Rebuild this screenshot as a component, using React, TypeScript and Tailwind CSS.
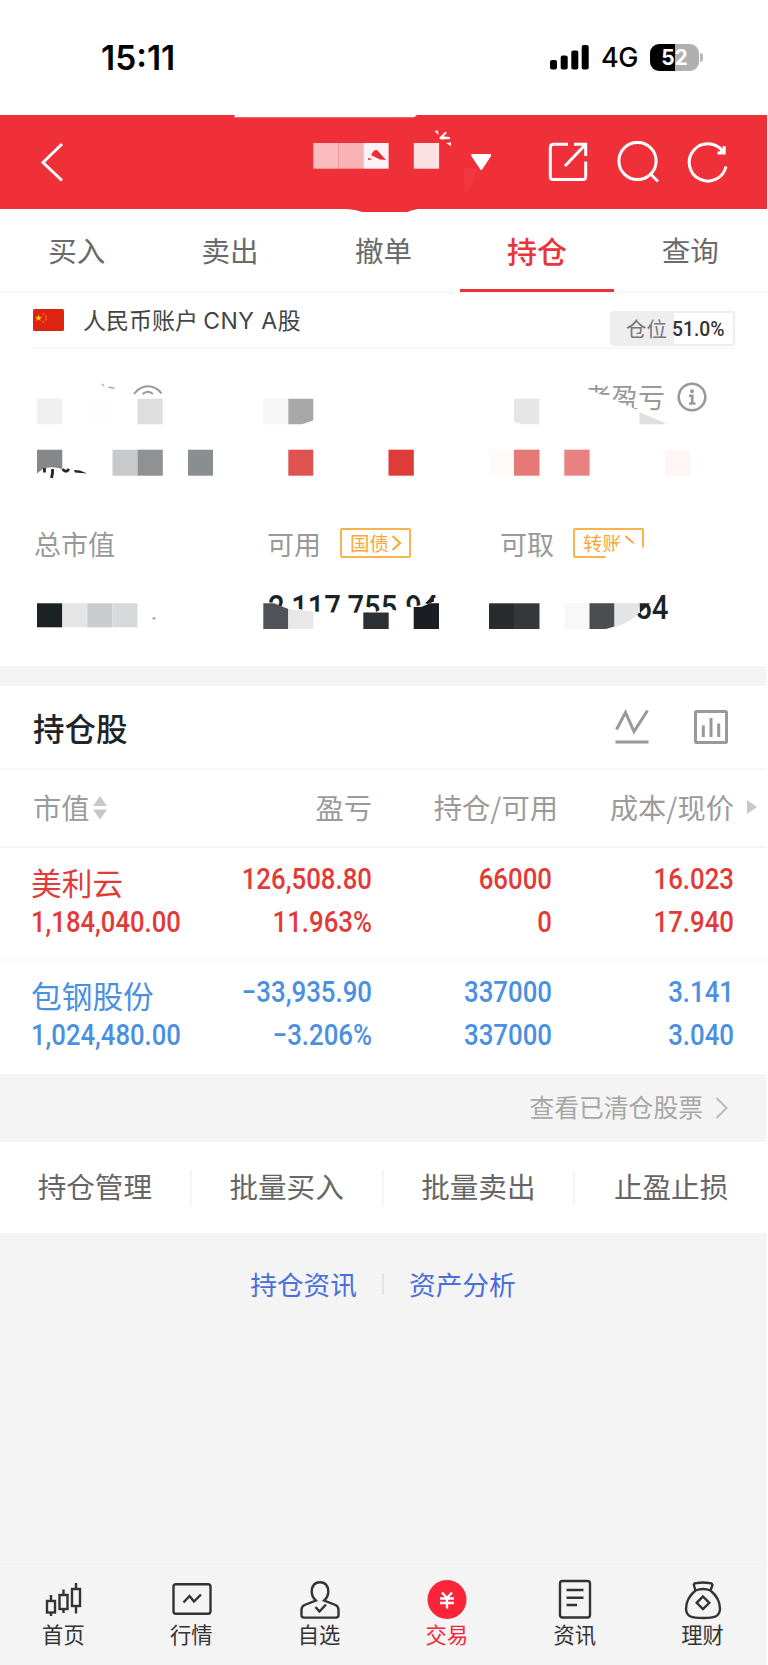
import type { ReactNode } from "react";

const CJK = "font-['Noto_Sans_CJK_SC',sans-serif]";
const NUM = "font-['Roboto',sans-serif] font-medium";

type Holding = {
  name: string;
  marketValue: string;
  profit: string;
  profitRate: string;
  amount: string;
  available: string;
  cost: string;
  price: string;
  up: boolean;
};

const holdings: Holding[] = [
  {
    name: "美利云",
    marketValue: "1,184,040.00",
    profit: "126,508.80",
    profitRate: "11.963%",
    amount: "66000",
    available: "0",
    cost: "16.023",
    price: "17.940",
    up: true,
  },
  {
    name: "包钢股份",
    marketValue: "1,024,480.00",
    profit: "−33,935.90",
    profitRate: "−3.206%",
    amount: "337000",
    available: "337000",
    cost: "3.141",
    price: "3.040",
    up: false,
  },
];

function StatusBar() {
  return (
    <div className="flex h-[115px] items-start justify-between pt-[37px] pl-[101px] pr-[64px] font-['Inter',sans-serif] text-black">
      <div className="pt-[1px] text-[33.5px] leading-[40px] font-semibold">15:11</div>
      <div className="flex h-[40px] items-center">
        <svg width="39" height="25" viewBox="0 0 39 25">
          <rect x="0" y="15" width="7" height="9.5" rx="2" />
          <rect x="10.7" y="10.5" width="7" height="14" rx="2" />
          <rect x="21.3" y="5.5" width="7" height="19" rx="2" />
          <rect x="31.7" y="0" width="7" height="24.5" rx="2" />
        </svg>
        <span className="ml-[12px] w-[38px] pt-[2px] text-[27px] leading-[38px] font-medium tracking-[-0.5px]">
          4G
        </span>
        <div className="ml-[11px] flex h-[27px] w-[49px] items-center justify-center rounded-[9px] bg-[linear-gradient(90deg,#000_52%,#b0b0b0_52%)] text-[21px] leading-none font-bold text-white">
          52
        </div>
        <div className="ml-[1px] h-[9px] w-[3px] rounded-r-full bg-[#b8b8b8]" />
      </div>
    </div>
  );
}

function Header() {
  return (
    <div className="relative flex h-[94px] items-center bg-[#f03038]">
      <svg
        className="ml-[40px]"
        width="24"
        height="40"
        viewBox="0 0 24 40"
        fill="none"
        stroke="#fff"
        strokeWidth="3"
      >
        <path d="M22 2 L3 20.5 L22 38.5" />
      </svg>
      <div className="ml-auto flex items-center gap-[28px] pr-[38px]">
        <svg
          width="42"
          height="42"
          viewBox="0 0 42 42"
          fill="none"
          stroke="#fff"
          strokeWidth="3"
        >
          <path d="M21 3.3 H6.5 Q3.3 3.3 3.3 6.5 V35.5 Q3.3 38.5 6.5 38.5 H35.5 Q38.7 38.5 38.7 35.5 V20.5" />
          <path d="M27 3.3 H38.7 V15 M38 4 L18 25" />
        </svg>
        <svg
          width="42"
          height="42"
          viewBox="0 0 42 42"
          fill="none"
          stroke="#fff"
          strokeWidth="3"
        >
          <circle cx="20.5" cy="20" r="18.6" />
          <path d="M33.5 33 L41 40.5" />
        </svg>
        <svg
          width="42"
          height="42"
          viewBox="0 0 42 42"
          fill="none"
          stroke="#fff"
          strokeWidth="3"
        >
          <path d="M39 25.5 A18.6 18.6 0 1 1 35.5 10" />
          <path d="M37.2 5 V12 H30.5" />
          <path d="M37.2 12 H31.5 L37.2 6 Z" fill="#fff" stroke="none" />
        </svg>
      </div>
      {/* account name hidden behind mosaic, plus dropdown arrow */}
      <svg
        className="absolute left-0 top-0"
        width="540"
        height="97"
        viewBox="0 115 540 97"
      >
        <path d="M235 115 H417 L414 117.3 H234 Z" fill="#fff" />
        <path d="M346 209 Q356 209.5 362 212 H407 Q412 210 418 209 Z" fill="#f03038" />
        <rect x="313.3" y="143" width="25" height="25.7" fill="#fabcbe" />
        <rect x="338.3" y="143" width="25" height="25.7" fill="#f8b3b6" />
        <rect x="363.3" y="143" width="25.3" height="25.7" fill="#fef3f4" />
        <path d="M371 155 L374 150.5 L377 150 L386 160 L380 159.5 Z M368 158 L373 159 L368 160 Z" fill="#ee2c34" />
        <rect x="413.8" y="143" width="25.3" height="25.7" fill="#fce0e2" />
        <path
          d="M434.5 131 L438 130.5 L438.5 135 Z M439 138 L445 132 L447 132.5 L443.5 136.5 L450 137 V139 L441 139.5 Z M446 143 L451 142.5 L451 146 Z"
          fill="#fff"
        />
        <path d="M464 168 H477 Q475 184 464 194 Z" fill="#f1373f" />
        <path d="M472 154 H490 Q492 154.5 491 156 L482.5 169 Q481.3 171 480 169 L471.3 156 Q470.5 154.5 472 154 Z" fill="#fff" />
      </svg>
    </div>
  );
}

const tabs = ["买入", "卖出", "撤单", "持仓", "查询"];

function TradeTabs() {
  return (
    <div className="grid h-[84px] grid-cols-5 border-b-2 border-[#f7f7f7]">
      {tabs.map((tab) => (
        <div
          key={tab}
          className={
            tab === "持仓"
              ? "h-[83px] border-b-[3.5px] border-[#e93539] text-center text-[30px] leading-[82px] font-medium text-[#e93539]"
              : "h-[82px] text-center text-[28.5px] leading-[82px] text-[#6a6a6a]"
          }
        >
          {tab}
        </div>
      ))}
    </div>
  );
}

function AccountRow() {
  return (
    <div className="mr-[32px] ml-[33px] flex h-[56px] items-start border-b-2 border-[#f8f8f8]">
      <svg className="mt-[16px]" width="31" height="22" viewBox="0 0 31 22">
        <rect width="31" height="22" rx="1.5" fill="#de2310" />
        <path
          d="M5.5 5.5 L6.5 8 L9 8 L7 9.7 L7.8 12 L5.5 10.6 L3.3 12 L4 9.7 L2 8 L4.6 8 Z"
          fill="#fc0"
        />
        <g fill="#e88a14">
          <circle cx="10.5" cy="4.8" r="0.9" />
          <circle cx="13" cy="7.5" r="0.9" />
          <circle cx="13" cy="10.5" r="0.9" />
          <circle cx="10.5" cy="13" r="0.9" />
        </g>
      </svg>
      <div className="ml-[19px] text-[23px] leading-[53px] text-[#444]">
        人民币账户{" "}
        <span className="font-['Inter',sans-serif] tracking-[0.5px]">CNY A</span>股
      </div>
      <div className="ml-auto mt-[18px] flex h-[35px] w-[125px] items-center rounded-[3px] border-2 border-[#eeeef1] bg-[linear-gradient(90deg,#eeeef1_51%,#fff_51%)] pl-[14px]">
        <span className="text-[20.5px] leading-[31px] text-[#777]">仓位</span>
        <span className="ml-[5px] pt-[1px] font-['Roboto',sans-serif] text-[21px] leading-[31px] font-medium text-[#333]">
          <span className="inline-block origin-left scale-x-[0.92]">51.0%</span>
        </span>
      </div>
    </div>
  );
}

function SummaryTag({ children }: { children: ReactNode }) {
  return (
    <span className="-mt-[2px] flex h-[30px] w-[71px] items-center rounded-[2px] border-2 border-[#f9b34c] pl-[8px] text-[19.5px] leading-[26px] text-[#f5a93a]">
      {children}
      <svg
        className="ml-[2px]"
        width="11"
        height="16"
        viewBox="0 0 11 16"
        fill="none"
        stroke="#f5a93a"
        strokeWidth="2.2"
      >
        <path d="M1.5 1 L9 8 L1.5 15" />
      </svg>
    </span>
  );
}

function Mosaic() {
  return (
    <svg
      className="absolute left-0 top-0"
      width="767"
      height="317"
      viewBox="0 349 767 317"
    >
      <g>
        <path d="M560 380 L585 388 L610 398 L640 411 V426 H560 Z" fill="#fff" />
        <rect x="37" y="398.7" width="25.3" height="25.6" fill="#efefef" />
        <rect x="87.5" y="398.7" width="25" height="25.6" fill="#fdfdfd" />
        <rect x="137.5" y="398.7" width="25.3" height="25.6" fill="#dedede" />
        <rect x="263.3" y="398.7" width="25" height="25.6" fill="#f6f6f6" />
        <path d="M288.3 398.7 H313.3 V420.5 L302 424.3 H288.3 Z" fill="#a8a8a8" />
        <path d="M514 398.7 H539.5 V424.3 H522 L514 422 Z" fill="#e6e6e6" />
        <path d="M639.5 412 L665 423 V424.3 H639.5 Z" fill="#e0e0e0" />
        <path d="M102 384 L104 386 M108.5 387 L114.500 388.5" stroke="#aaa" strokeWidth="1.3" />
        <path
          d="M134 394 Q140 386.3 148 386.3 Q156 386.3 161.5 393.5 M142.5 394 Q148 389.5 153 394"
          fill="none"
          stroke="#999"
          strokeWidth="2"
        />
      </g>
      <g>
        <path d="M37 449.7 H62.3 V469 Q50 465.5 42 469.5 L37 473.5 Z" fill="#868788" />
        <path
          d="M44.5 468 V472.5 M52.5 469 V473 L51.5 478 M62.5 469 Q66 473.5 69 469"
          fill="none"
          stroke="#20262a"
          strokeWidth="2.8"
        />
        <path d="M74 470 L80 470.5 L87 473.5 L75 472.5 Z" fill="#20262a" />
        <rect x="112.5" y="449.7" width="25" height="26" fill="#c8c9cb" />
        <rect x="137.5" y="449.7" width="25.3" height="26" fill="#909192" />
        <rect x="188" y="449.7" width="25" height="26" fill="#898e91" />
        <rect x="288.3" y="449.7" width="25" height="26" fill="#e0524f" />
        <rect x="388.5" y="449.7" width="25.3" height="26" fill="#de3c39" />
        <rect x="488.5" y="449.7" width="25.5" height="26" fill="#fffbfb" />
        <rect x="514" y="449.7" width="25.5" height="26" fill="#e67876" />
        <rect x="564.3" y="449.7" width="25.3" height="26" fill="#e98180" />
        <rect x="665" y="449.7" width="25" height="26" fill="#fff5f6" />
      </g>
      <path
        d="M604 561 L607 553 L614 551 L619 543 L628 540.5 L634 544 L642 547.5 H648 V561 Z"
        fill="#fff"
      />
      <g>
        <path
          d="M264 604 L288 607 L313 611.5 L345 613 L376 612 L384 607.5 L396 610.5 L402 606.5 L413 607 L428 603.3 L432 598 H442 V632 H264 Z"
          fill="#fff"
        />
        <path d="M37 603.3 H62.3 V627.3 H37 Z" fill="#1c2224" />
        <rect x="62.3" y="603.3" width="25" height="24" fill="#e5e5e5" />
        <rect x="87.3" y="603.3" width="25.2" height="24" fill="#cbccce" />
        <rect x="112.5" y="603.3" width="25" height="24" fill="#d8d9db" />
        <rect x="152.5" y="617.5" width="3" height="1.8" fill="#999" />
        <path d="M263.3 603.3 H274 L288.3 609 V629 H263.3 Z" fill="#4f5257" />
        <path d="M288.3 609 L313.3 611.5 V629 H288.3 Z" fill="#e8e8e8" />
        <path d="M363.3 612.5 H388.7 V629 H363.3 Z" fill="#2c3034" />
        <path d="M413.7 607 H421 L430 603.3 H439 V629 H413.7 Z" fill="#1a1d21" />
        <path d="M425 603.3 L432 596.5 L434 597 V601.5 L428 604 Z" fill="#1d2226" />
        <rect x="489" y="603.3" width="25" height="25.7" fill="#282c2f" />
        <rect x="514" y="603.3" width="25.5" height="25.7" fill="#34383a" />
        <rect x="564.3" y="603.3" width="25.3" height="25.7" fill="#f8f8f8" />
        <path d="M630 594 H652 V600 L648 604 L640 613 H634 Z" fill="#fff" />
        <path d="M589.5 603.3 H614.5 V626.5 L606 629 H589.5 Z" fill="#4a4e50" />
        <path d="M614.5 603.3 H640 V612 Q630 623 614.5 627 Z" fill="#e4e4e6" />
        <path d="M639.7 603.3 H650 L640 613 Z" fill="#1d2326" />
      </g>
    </svg>
  );
}

function Summary() {
  return (
    <div className="relative h-[317px] text-[27px] text-[#999]">
      <div className="flex h-[96px] items-center justify-end pr-[60px]">
        <span className="leading-[40px]">考盈亏</span>
        <svg
          className="ml-[12px]"
          width="30"
          height="30"
          viewBox="0 0 30 30"
          fill="none"
          stroke="#999"
          strokeWidth="2.6"
        >
          <circle cx="15" cy="15" r="13.3" />
          <circle cx="15" cy="9.2" r="2" fill="#999" stroke="none" />
          <path d="M12 13.7 H15.3 V21.5 M12 21.5 H18.5" />
        </svg>
      </div>
      <div className="mt-[79px] grid h-[40px] grid-cols-[233px_233px_1fr] pl-[34px]">
        <div className="leading-[40px]">总市值</div>
        <div className="flex items-center leading-[40px]">
          可用
          <span className="ml-[19px] flex">
            <SummaryTag>国债</SummaryTag>
          </span>
        </div>
        <div className="flex items-center leading-[40px]">
          可取
          <span className="ml-[19px] flex">
            <SummaryTag>转账</SummaryTag>
          </span>
        </div>
      </div>
      <div
        className={`${NUM} mt-[23px] flex h-[40px] justify-between pl-[268px] pr-[98px] text-[33px] leading-[41px] text-[#1d2226]`}
      >
        <span className="origin-left scale-x-[0.885]">2,117,755.94</span>
        <span className="origin-right scale-x-[0.89]">54</span>
      </div>
      <Mosaic />
    </div>
  );
}

function SectionTitle() {
  return (
    <div className="flex h-[84px] items-center border-b-2 border-[#f7f7f7] pl-[33px] pr-[39px]">
      <h2 className="text-[31.5px] leading-[80px] font-medium text-[#1f2428]">
        持仓股
      </h2>
      <svg
        className="ml-auto"
        width="34"
        height="36"
        viewBox="0 0 34 36"
        fill="none"
        stroke="#999"
        strokeWidth="3"
      >
        <path d="M1.5 20.5 L10.5 3.5 L19 22.5 L32.5 1.5 M0.5 33 H33.5" />
      </svg>
      <svg
        className="ml-[45px]"
        width="34"
        height="34"
        viewBox="0 0 34 34"
        fill="none"
        stroke="#999"
        strokeWidth="3"
      >
        <rect x="1.5" y="1.5" width="31" height="31" rx="1" />
        <path d="M9.3 15.5 V27 M17 8 V27 M24.7 13.5 V27" />
      </svg>
    </div>
  );
}

function TableHead() {
  return (
    <div className="relative grid h-[78px] grid-cols-[170px_169px_186px_176px] border-b-2 border-[#f5f5f5] pl-[33px] text-right text-[28.3px] leading-[73px] text-[#9b9b9b]">
      <div className="flex items-start">
        市值
        <svg
          className="mt-[26px] ml-[3px]"
          width="14"
          height="24"
          viewBox="0 0 14 24"
          fill="#c8c8c8"
        >
          <path d="M7 0 L14 10 H0 Z M0 13.5 H14 L7 23.5 Z" />
        </svg>
      </div>
      <div>盈亏</div>
      <div>持仓/可用</div>
      <div>成本/现价</div>
      <svg
        className="absolute right-[10px] top-[30px]"
        width="10"
        height="14"
        viewBox="0 0 10 14"
        fill="#c8c8c8"
      >
        <path d="M0 0 L10 7 L0 14 Z" />
      </svg>
    </div>
  );
}

function NumCell({ top, bottom }: { top: string; bottom: string }) {
  return (
    <div className={`${NUM} origin-right scale-x-[0.89] text-right text-[29px] leading-[43px]`}>
      <div>{top}</div>
      <div>{bottom}</div>
    </div>
  );
}

function HoldingRow({ item }: { item: Holding }) {
  return (
    <div
      className={`grid grid-cols-[170px_171px_180px_182px] pt-[10px] pl-[31px] ${
        item.up
          ? "h-[113px] border-b-2 border-[#f9f9f9] text-[#e33a38]"
          : "h-[113px] text-[#4a90e2]"
      }`}
    >
      <div>
        <div className="text-[30.7px] leading-[47px] whitespace-nowrap">
          {item.name}
        </div>
        <div className={`${NUM} w-max origin-left scale-x-[0.885] text-[29px] leading-[34px]`}>
          {item.marketValue}
        </div>
      </div>
      <NumCell top={item.profit} bottom={item.profitRate} />
      <NumCell top={item.amount} bottom={item.available} />
      <NumCell top={item.cost} bottom={item.price} />
    </div>
  );
}

const actions = ["持仓管理", "批量买入", "批量卖出", "止盈止损"];

function Actions() {
  return (
    <div className="grid h-[91px] grid-cols-4 items-center bg-white text-[28.6px] text-[#666]">
      {actions.map((label, i) => (
        <div
          key={label}
          className={`h-[35px] text-center leading-[31px] ${i < 3 ? "border-r-2 border-[#f5f5f5]" : ""}`}
        >
          {label}
        </div>
      ))}
    </div>
  );
}

function NavItem({
  label,
  active,
  children,
}: {
  label: string;
  active?: boolean;
  children: ReactNode;
}) {
  return (
    <div
      className={`flex flex-col items-center ${active ? "text-[#fb2438]" : "text-[#333]"}`}
    >
      <svg
        width="42"
        height="42"
        viewBox="0 0 42 42"
        fill="none"
        stroke="currentColor"
        strokeWidth="2.4"
      >
        {children}
      </svg>
      <span className="pr-[1px] text-[21.3px] leading-[28px]">{label}</span>
    </div>
  );
}

function BottomNav() {
  return (
    <div className="grid h-[102px] grid-cols-6 border-t border-[#f0f0f0] pt-[14px]">
      <NavItem label="首页">
        <rect x="4" y="23" width="8" height="11.5" />
        <path d="M8 17 V23 M8 34.5 V38" />
        <rect x="16.5" y="17" width="8" height="14" />
        <path d="M20.500 11.5 V17 M20.500 31 V35" />
        <rect x="29" y="11" width="8" height="17" />
        <path d="M33 5 V11 M33 28 V35.5" />
      </NavItem>
      <NavItem label="行情">
        <rect x="2.5" y="6.3" width="37" height="29.5" rx="2.5" />
        <path d="M12.5 24.5 L18.5 18 L23 23.5 L30 16.5" />
      </NavItem>
      <NavItem label="自选">
        <path d="M16.8 22.5 Q12.5 18.5 12.7 13 Q13.3 4.2 21 4.2 Q28.7 4.2 29.3 13 Q29.5 18.5 25.2 22.5 L36.5 27 Q39.5 28.5 39.5 32 V37 Q39.5 39.6 37 39.6 H5 Q2.5 39.6 2.5 37 V32 Q2.5 28.5 5.5 27 Z" />
        <path d="M16.5 29 L20.5 33.5 L27 26.5" />
      </NavItem>
      <NavItem label="交易" active>
        <circle cx="21" cy="21.5" r="19.5" fill="currentColor" stroke="none" />
        <path
          d="M16 14.5 L21 20 L26 14.5 M21 20 V30.5 M14 20.5 H28 M14 25 H28"
          stroke="#fff"
        />
      </NavItem>
      <NavItem label="资讯">
        <rect x="6" y="3" width="30" height="36.5" rx="2.5" />
        <path d="M12.5 12 H29.5 M12.5 19.7 H29.5 M12.5 27 H23" />
      </NavItem>
      <NavItem label="理财">
        <path d="M13.5 12.5 L11.8 7 Q12 5 15 5 Q21 4 27 5 Q30 5 30.5 7 L28.5 12.5" />
        <path d="M13.5 12.5 Q21 9.5 28.5 12.5 C34 17 38 24 38 31 C37.5 39 32 40 21 40 C10 40 4.5 39 4 31 C4 24 8 17 13.5 12.5 Z" />
        <path d="M21 18.5 L27.3 24.8 L21 31 L14.7 24.8 Z" />
      </NavItem>
    </div>
  );
}

export default function App() {
  return (
    <div className="w-[768px] bg-white">
      <div className={`${CJK} flex h-[1665px] w-[767px] flex-col bg-white`}>
        <StatusBar />
        <Header />
        <TradeTabs />
        <AccountRow />
        <Summary />
        <div className="h-[20px] bg-[#f4f4f4]" />
        <SectionTitle />
        <TableHead />
        {holdings.map((item) => (
          <HoldingRow key={item.name} item={item} />
        ))}
        <div className="flex flex-1 flex-col bg-[#f4f4f4]">
          <div className="flex h-[68px] items-center justify-end pr-[39px] pb-[2px] text-[24.8px] text-[#a6a6a6]">
            查看已清仓股票
            <svg
              className="mt-[2px] ml-[12px]"
              width="13"
              height="22"
              viewBox="0 0 13 22"
              fill="none"
              stroke="#bbb"
              strokeWidth="2"
            >
              <path d="M1.5 1 L11.5 11 L1.5 21" />
            </svg>
          </div>
          <Actions />
          <div className="mt-[31px] flex items-center justify-center pr-[1px] text-[26.7px] leading-[40px] text-[#4a6edc]">
            <span>持仓资讯</span>
            <span className="mx-[25px] h-[22px] w-[2px] bg-[#e4e4e4]" />
            <span>资产分析</span>
          </div>
          <div className="flex-1" />
          <BottomNav />
        </div>
      </div>
    </div>
  );
}
